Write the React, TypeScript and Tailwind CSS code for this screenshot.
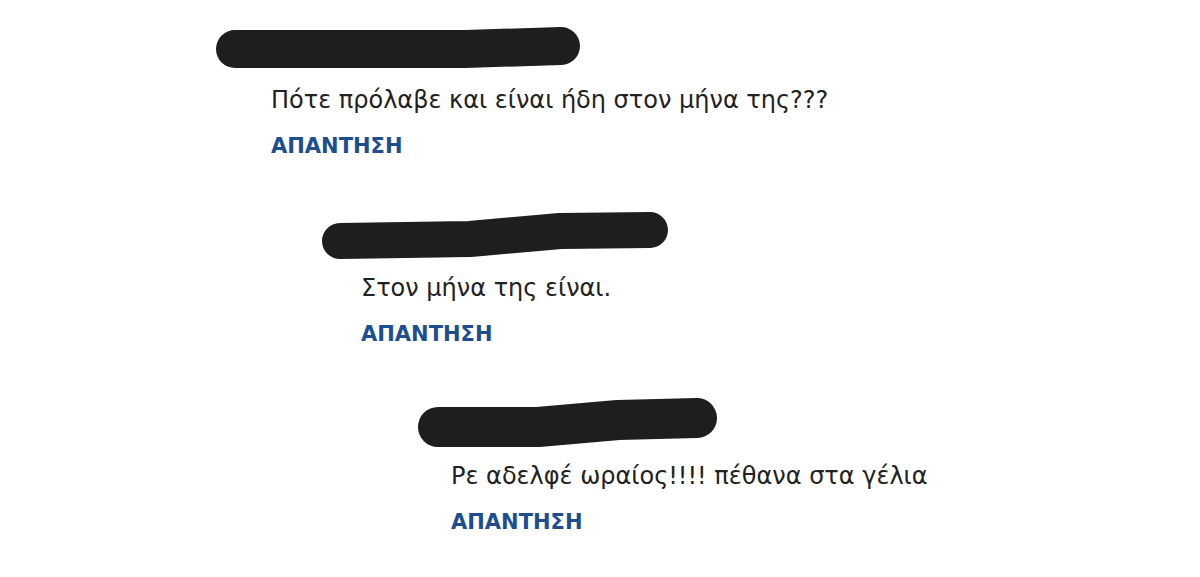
import React from 'react';

type Blob = { w: number; d: string; sw: number; ml: string };

const blobs: Blob[] = [
  { w: 380, d: 'M20 25 L250 25 L346 22', sw: 38, ml: '-ml-[56px]' },
  { w: 360, d: 'M20 29 L150 27 L240 19 L330 18', sw: 36, ml: '-ml-[41px]' },
  { w: 310, d: 'M20 27 L120 27 L200 20 L279 18', sw: 40, ml: '-ml-[33px]' },
];

function Redacted({ blob }: { blob: Blob }) {
  return (
    <svg width={blob.w} height={48} viewBox={`0 0 ${blob.w} 48`} className={`block overflow-visible ${blob.ml}`}>
      <path d={blob.d} fill="none" stroke="#1e1e1e" strokeWidth={blob.sw} strokeLinecap="round" strokeLinejoin="round" />
    </svg>
  );
}

function Comment({ blob, text, children }: { blob: Blob; text: string; children?: React.ReactNode }) {
  return (
    <div className="flex flex-col">
      <Redacted blob={blob} />
      <p className="mt-[13px] leading-[30px] text-[24px] text-[#222]">{text}</p>
      <a className="mt-[16px] leading-[30px] text-[21px] font-bold text-[#1d4e8f]">ΑΠΑΝΤΗΣΗ</a>
      {children && <div className="pl-[90px] mt-[51px]">{children}</div>}
    </div>
  );
}

export default function App() {
  return (
    <div className="w-[1200px] h-[577px] bg-white pl-[271px] pt-[24px] font-['DejaVu_Sans',sans-serif] overflow-hidden">
      <Comment blob={blobs[0]} text="Πότε πρόλαβε και είναι ήδη στον μήνα της???">
        <Comment blob={blobs[1]} text="Στον μήνα της είναι.">
          <Comment blob={blobs[2]} text="Ρε αδελφέ ωραίος!!!! πέθανα στα γέλια" />
        </Comment>
      </Comment>
    </div>
  );
}
